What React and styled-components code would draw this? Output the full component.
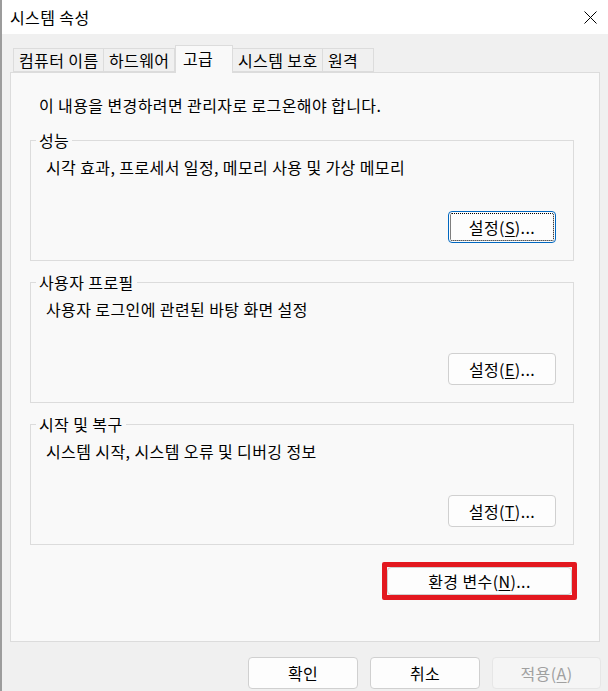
import React from 'react';
import styled, { createGlobalStyle } from 'styled-components';

const GlobalStyle = createGlobalStyle`
  html, body {
    margin: 0;
    padding: 0;
    overflow: hidden;
  }
  body {
    font-family: "Noto Sans CJK KR", "Noto Sans", sans-serif;
    color: #000;
  }
`;

const Window = styled.div`
  width: 608px;
  height: 691px;
  box-sizing: border-box;
  background: #f0f0f0;
  border-left: 2px solid #9c9c9c;
  display: flex;
  flex-direction: column;
  font-size: 16px;
  letter-spacing: 0.4px;
`;

const TitleBar = styled.div`
  height: 34px;
  flex-shrink: 0;
  background: #fff;
  display: flex;
  align-items: center;
  justify-content: space-between;
  padding: 0 11px 0 8px;
`;

const CloseIcon = styled.svg`
  width: 13px;
  height: 13px;
  display: block;
`;

const Content = styled.div`
  padding: 11px 8px 0 8px;
  display: flex;
  flex-direction: column;
`;

const TabStrip = styled.div`
  display: flex;
  align-items: flex-end;
  height: 27px;
  padding-left: 3px;
  position: relative;
  z-index: 1;
`;

const Tab = styled.div`
  box-sizing: border-box;
  width: ${p => p.$w}px;
  height: ${p => (p.$active ? 28 : 24)}px;
  margin-bottom: ${p => (p.$active ? -1 : 0)}px;
  padding-left: ${p => (p.$active ? 7 : 5)}px;
  padding-bottom: ${p => (p.$active ? 3 : 0)}px;
  display: flex;
  align-items: center;
  background: ${p => (p.$active ? '#f9f9f9' : '#f0f0f0')};
  border: 1px solid #dcdcdc;
  border-bottom: ${p => (p.$active ? 'none' : '1px solid #dcdcdc')};
  border-left: ${p => (p.$first || p.$active ? '1px solid #dcdcdc' : 'none')};
  white-space: nowrap;
  overflow: hidden;
`;

const Panel = styled.div`
  box-sizing: border-box;
  height: 570px;
  background: #f9f9f9;
  border: 1px solid #dcdcdc;
  padding-top: 22px;
  display: flex;
  flex-direction: column;
`;

const Notice = styled.div`
  line-height: 20px;
  padding-left: 28px;
  margin-bottom: 15px;
`;

const Group = styled.fieldset`
  margin: 0 25px ${p => p.$gap}px 19px;
  padding: 0;
  border: 1px solid #dcdcdc;
  min-width: 0;
`;

const Legend = styled.legend`
  margin-left: 5px;
  padding: 0 3px;
  line-height: 20px;
`;

const GroupBody = styled.div`
  padding: 7px 17px 17px 15px;
  display: flex;
  flex-direction: column;
`;

const Description = styled.div`
  line-height: 20px;
  margin-bottom: 34px;
`;

const Button = styled.button`
  box-sizing: border-box;
  width: ${p => p.$w || 108}px;
  height: ${p => p.$h || 32}px;
  padding: 0;
  font-family: inherit;
  font-size: 16px;
  letter-spacing: 0.4px;
  color: ${p => (p.disabled ? '#a0a0a0' : '#000')};
  background: ${p => (p.disabled ? '#f5f5f5' : '#fdfdfd')};
  border: 1px solid ${p => (p.$focused ? '#0067c0' : p.disabled ? '#e6e6e6' : '#d0d0d0')};
  border-radius: 4px;
  outline: ${p => (p.$focused ? '1px dotted #000' : 'none')};
  outline-offset: -3px;
  align-self: ${p => p.$align || 'auto'};
  cursor: default;

  u {
    text-underline-offset: 2px;
  }
`;

const Highlight = styled.div`
  align-self: flex-end;
  margin: 17px 22px 0 0;
  border: 5px solid #e3181f;
  border-radius: 2px;
  display: flex;
`;

const Footer = styled.div`
  display: flex;
  justify-content: flex-end;
  gap: 12px;
  padding: 15px 7px 0 0;
  margin-right: -8px;
`;

const tabs = [
  { label: '컴퓨터 이름', w: 91 },
  { label: '하드웨어', w: 71 },
  { label: '고급', w: 58, active: true },
  { label: '시스템 보호', w: 90 },
  { label: '원격', w: 51 },
];

const groups = [
  { title: '성능', text: '시각 효과, 프로세서 일정, 메모리 사용 및 가상 메모리', key: 'S', focused: true, gap: 11 },
  { title: '사용자 프로필', text: '사용자 로그인에 관련된 바탕 화면 설정', key: 'E', gap: 11 },
  { title: '시작 및 복구', text: '시스템 시작, 시스템 오류 및 디버깅 정보', key: 'T', gap: 0 },
];

export default function App() {
  return (
    <>
      <GlobalStyle />
      <Window>
        <TitleBar>
          <span>시스템 속성</span>
          <CloseIcon viewBox="0 0 13 13">
            <path d="M0.5 0.5 L12.5 12.5 M12.5 0.5 L0.5 12.5" stroke="#000" strokeWidth="1" fill="none" />
          </CloseIcon>
        </TitleBar>
        <Content>
          <TabStrip>
            {tabs.map((t, i) => (
              <Tab key={t.label} $w={t.w} $active={t.active} $first={i === 0}>
                {t.label}
              </Tab>
            ))}
          </TabStrip>
          <Panel>
            <Notice>이 내용을 변경하려면 관리자로 로그온해야 합니다.</Notice>
            {groups.map(g => (
              <Group key={g.title} $gap={g.gap}>
                <Legend>{g.title}</Legend>
                <GroupBody>
                  <Description>{g.text}</Description>
                  <Button $align="flex-end" $focused={g.focused}>
                    설정(<u>{g.key}</u>)...
                  </Button>
                </GroupBody>
              </Group>
            ))}
            <Highlight>
              <Button $w={185} $h={28}>
                환경 변수(<u>N</u>)...
              </Button>
            </Highlight>
          </Panel>
          <Footer>
            <Button $w={110}>확인</Button>
            <Button $w={110}>취소</Button>
            <Button $w={109} disabled>
              적용(<u>A</u>)
            </Button>
          </Footer>
        </Content>
      </Window>
    </>
  );
}
